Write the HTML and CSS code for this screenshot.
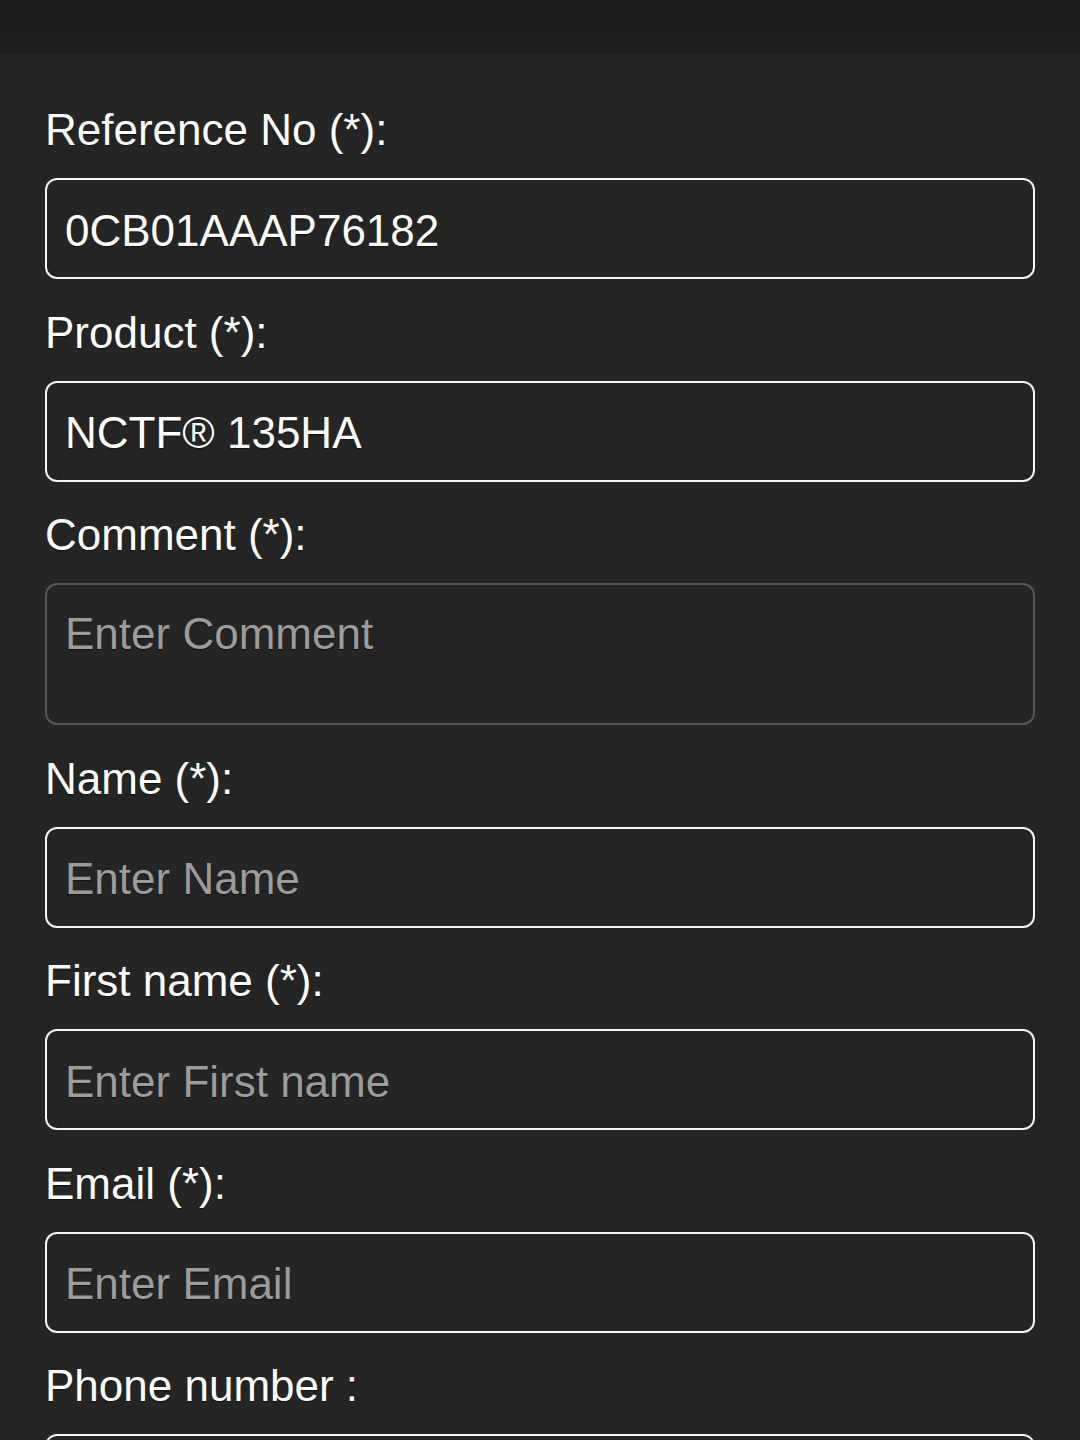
FILE: index.html
```html
<!DOCTYPE html>
<html lang="en">
<head>
    <meta charset="UTF-8">
    <meta name="viewport" content="width=device-width, initial-scale=1.0">
    <title>Contact Request</title>
    <link rel="stylesheet" href="styles.css">
</head>
<body>
    <header class="topbar"></header>

    <form class="request-form">
        <div class="field">
            <label for="refNo">Reference No (*):</label>
            <input type="text" id="refNo" value="0CB01AAAP76182">
        </div>
        <div class="field">
            <label for="product">Product (*):</label>
            <input type="text" id="product" value="NCTF® 135HA">
        </div>
        <div class="field">
            <label for="comment">Comment (*):</label>
            <textarea id="comment" placeholder="Enter Comment"></textarea>
        </div>
        <div class="field">
            <label for="name">Name (*):</label>
            <input type="text" id="name" placeholder="Enter Name">
        </div>
        <div class="field">
            <label for="firstName">First name (*):</label>
            <input type="text" id="firstName" placeholder="Enter First name">
        </div>
        <div class="field">
            <label for="email">Email (*):</label>
            <input type="email" id="email" placeholder="Enter Email">
        </div>
        <div class="field">
            <label for="phone">Phone number :</label>
            <input type="tel" id="phone">
        </div>
    </form>
</body>
</html>
```

FILE: styles.css
```css
* {
    box-sizing: border-box;
}

body {
    margin: 0;
    font-family: "Liberation Sans", Arial, sans-serif;
    background-color: #252525;
    color: #FFFFFF;
    height: 1440px;
    overflow: hidden;
}

.topbar {
    height: 54px;
    background: linear-gradient(#1b1b1b, #1f1f1f);
}

.request-form {
    padding: 51px 45px 0 45px;
}

.field {
    display: flex;
    flex-direction: column;
    margin-bottom: 28.5px;
}

.field label {
    font-size: 44px;
    line-height: 50px;
    margin-bottom: 23px;
    text-shadow: 0 1px 1px rgba(0, 0, 0, 0.6);
}

.field input,
.field textarea {
    width: 100%;
    height: 101px;
    padding: 4px 18px 0 18px;
    font-family: inherit;
    font-size: 44px;
    color: #FFFFFF;
    background-color: transparent;
    border: 2px solid #F4F4F0;
    border-radius: 12px;
    outline: none;
    text-shadow: 0 1px 1px rgba(0, 0, 0, 0.6);
}

.field textarea {
    height: 142px;
    padding: 24px 18px 0 18px;
    line-height: 50px;
    border-color: #555555;
    resize: none;
}

.field input::placeholder,
.field textarea::placeholder {
    color: #9C9C9C;
    opacity: 1;
}
```
